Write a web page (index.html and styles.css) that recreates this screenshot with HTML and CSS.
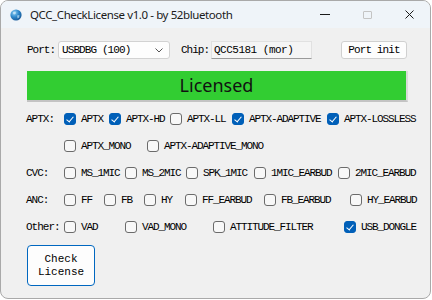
FILE: index.html
```html
<!DOCTYPE html>
<html lang="en">
<head>
    <meta charset="UTF-8">
    <title>QCC_CheckLicense v1.0</title>
    <link rel="stylesheet" href="styles.css">
</head>
<body>
    <div class="window">
        <div class="titlebar">
            <svg class="app-icon" width="12" height="12" viewBox="0 0 12 12">
                <defs>
                    <radialGradient id="globe" cx="0.35" cy="0.3" r="0.8">
                        <stop offset="0" stop-color="#8fd0f5"/>
                        <stop offset="0.5" stop-color="#2c86c9"/>
                        <stop offset="1" stop-color="#14508e"/>
                    </radialGradient>
                </defs>
                <circle cx="6" cy="6" r="5.6" fill="url(#globe)"/>
                <path d="M3 3.2 L5.4 2.4 L6 4.2 L4.4 5.6 L3.2 5 Z" fill="#cfe9f8" opacity="0.8"/>
                <path d="M7 6.4 L9.4 6 L9.2 8.6 L7.6 9.4 Z" fill="#bfe1f5" opacity="0.7"/>
            </svg>
            <span class="title">QCC_CheckLicense v1.0 - by 52bluetooth</span>
            <div class="caption">
                <span class="cap-btn"><i class="ico-min"></i></span>
                <span class="cap-btn"><i class="ico-max"></i></span>
                <span class="cap-btn">
                    <svg width="9" height="9" viewBox="0 0 9 9"><path d="M0.5 0.5 L8.5 8.5 M8.5 0.5 L0.5 8.5" stroke="#1a1a1a" stroke-width="1"/></svg>
                </span>
            </div>
        </div>

        <div class="content">
            <div class="port-row">
                <span class="lbl lbl-port">Port:</span>
                <div class="combo">
                    <span>USBDBG (100)</span>
                    <svg width="8" height="5" viewBox="0 0 8 5"><path d="M0.5 0.5 L4 4 L7.5 0.5" fill="none" stroke="#555" stroke-width="1"/></svg>
                </div>
                <span class="lbl lbl-chip">Chip:</span>
                <div class="field">QCC5181 (mor)</div>
                <button class="btn btn-init">Port init</button>
            </div>

            <div class="status">Licensed</div>

            <div class="opt-row row-aptx">
                <span class="lbl">APTX:</span>
                <label class="opt"><i class="cb on"></i>APTX</label>
                <label class="opt"><i class="cb on"></i>APTX-HD</label>
                <label class="opt"><i class="cb"></i>APTX-LL</label>
                <label class="opt"><i class="cb on"></i>APTX-ADAPTIVE</label>
                <label class="opt"><i class="cb on"></i>APTX-LOSSLESS</label>
            </div>
            <div class="opt-row row-aptx2">
                <span class="lbl"></span>
                <label class="opt"><i class="cb"></i>APTX_MONO</label>
                <label class="opt"><i class="cb"></i>APTX-ADAPTIVE_MONO</label>
            </div>
            <div class="opt-row row-cvc">
                <span class="lbl">CVC:</span>
                <label class="opt"><i class="cb"></i>MS_1MIC</label>
                <label class="opt"><i class="cb"></i>MS_2MIC</label>
                <label class="opt"><i class="cb"></i>SPK_1MIC</label>
                <label class="opt"><i class="cb"></i>1MIC_EARBUD</label>
                <label class="opt"><i class="cb"></i>2MIC_EARBUD</label>
            </div>
            <div class="opt-row row-anc">
                <span class="lbl">ANC:</span>
                <label class="opt"><i class="cb"></i>FF</label>
                <label class="opt"><i class="cb"></i>FB</label>
                <label class="opt"><i class="cb"></i>HY</label>
                <label class="opt"><i class="cb"></i>FF_EARBUD</label>
                <label class="opt"><i class="cb"></i>FB_EARBUD</label>
                <label class="opt"><i class="cb"></i>HY_EARBUD</label>
            </div>
            <div class="opt-row row-other">
                <span class="lbl">Other:</span>
                <label class="opt"><i class="cb"></i>VAD</label>
                <label class="opt"><i class="cb"></i>VAD_MONO</label>
                <label class="opt"><i class="cb"></i>ATTITUDE_FILTER</label>
                <label class="opt"><i class="cb on"></i>USB_DONGLE</label>
            </div>

            <button class="btn btn-check">Check<br>License</button>
        </div>
    </div>
</body>
</html>
```

FILE: styles.css
```css
* {margin: 0; padding: 0; box-sizing: border-box;}
body {background: #fff; font-family: "Liberation Mono", "Courier New", Courier, monospace; font-size: 11px; color: #000;}

.window {
    width: 431px; height: 299px; border: 1px solid #a9a9a9; border-radius: 8px;
    background: #f0f0f0; overflow: hidden; display: flex; flex-direction: column;
}

/* title bar */
.titlebar {height: 27px; background: #eff4f9; display: flex; align-items: center; flex-shrink: 0;}
.app-icon {margin: 0 8px 0 9px;}
.title {font-family: "Noto Sans", sans-serif; font-size: 11.5px; color: #1a1a1a; letter-spacing: -0.4px;}
.caption {margin-left: auto; display: flex; height: 100%;}
.cap-btn {width: 42px; display: flex; align-items: center; justify-content: center;}
.ico-min {display: block; width: 10px; height: 1px; background: #1a1a1a;}
.ico-max {display: block; width: 9px; height: 8px; border: 1px solid #c4c4c4; border-radius: 1px;}

/* content */
.content {padding: 0 0 0 25px;}
.lbl {letter-spacing: -1px;}

.port-row {display: flex; align-items: center; margin-top: 13px; height: 18px;}
.lbl-port {width: 32px; padding-left: 1px;}
.lbl-chip {width: 30px; margin-left: 11px;}
.combo {
    width: 112px; height: 18px; background: #fdfdfd; border: 1px solid #d2d2d2; border-radius: 3px;
    display: flex; align-items: center; justify-content: space-between; padding: 0 6px 0 3px; letter-spacing: -0.9px;
}
.field {
    width: 101px; height: 18px; background: #f5f5f5; border: 1px solid #e1e1e1; border-bottom-color: #9a9a9a;
    padding: 1px 2px 0; letter-spacing: -0.5px; line-height: 15px;
}
.btn {font-family: inherit; font-size: 11px; color: #000; background: #fdfdfd; cursor: default;}
.btn-init {
    width: 66px; height: 18px; margin-left: 29px; border: 1px solid #d0d0d0; border-radius: 3px; letter-spacing: -0.9px;
}

.status {
    width: 381px; height: 31px; margin: 12px 0 0 1px; background: #32cd32;
    border-bottom: 2px solid #c3c3c3; border-right: 2px solid #dadada;
    font-family: "Noto Sans", sans-serif; font-size: 18px; line-height: 29px; text-align: center; color: #111;
}

.opt-row {display: grid; align-items: center; height: 27px;}
.row-aptx {margin-top: 3px; grid-template-columns: 38px 45px 61px 62px 95px auto;}
.row-aptx2 {grid-template-columns: 38px 83px auto;}
.row-cvc {grid-template-columns: 38px 61px 61px 68px 84px auto;}
.row-anc {grid-template-columns: 38px 40px 40px 41px 79px 86px auto;}
.row-other {grid-template-columns: 38px 61px 88px 131px auto;}

.opt {display: flex; align-items: center; white-space: nowrap; letter-spacing: -1.1px;}
.cb {
    display: block; width: 12px; height: 12px; margin-right: 5px; flex-shrink: 0;
    border: 1px solid #6b6b6b; border-radius: 3px; background: #f8f8f8; position: relative;
}
.cb.on {background: #005fb8; border-color: #005fb8;}
.cb.on::after {
    content: ""; position: absolute; left: 3px; top: 1px; width: 3px; height: 6px;
    border: solid #fff; border-width: 0 1px 1px 0; transform: rotate(40deg);
}

.btn-check {
    display: block; width: 68px; height: 41px; margin: 5px 0 0 1px;
    border: 1px solid #0067c0; border-radius: 4px; line-height: 13px;
}
```
